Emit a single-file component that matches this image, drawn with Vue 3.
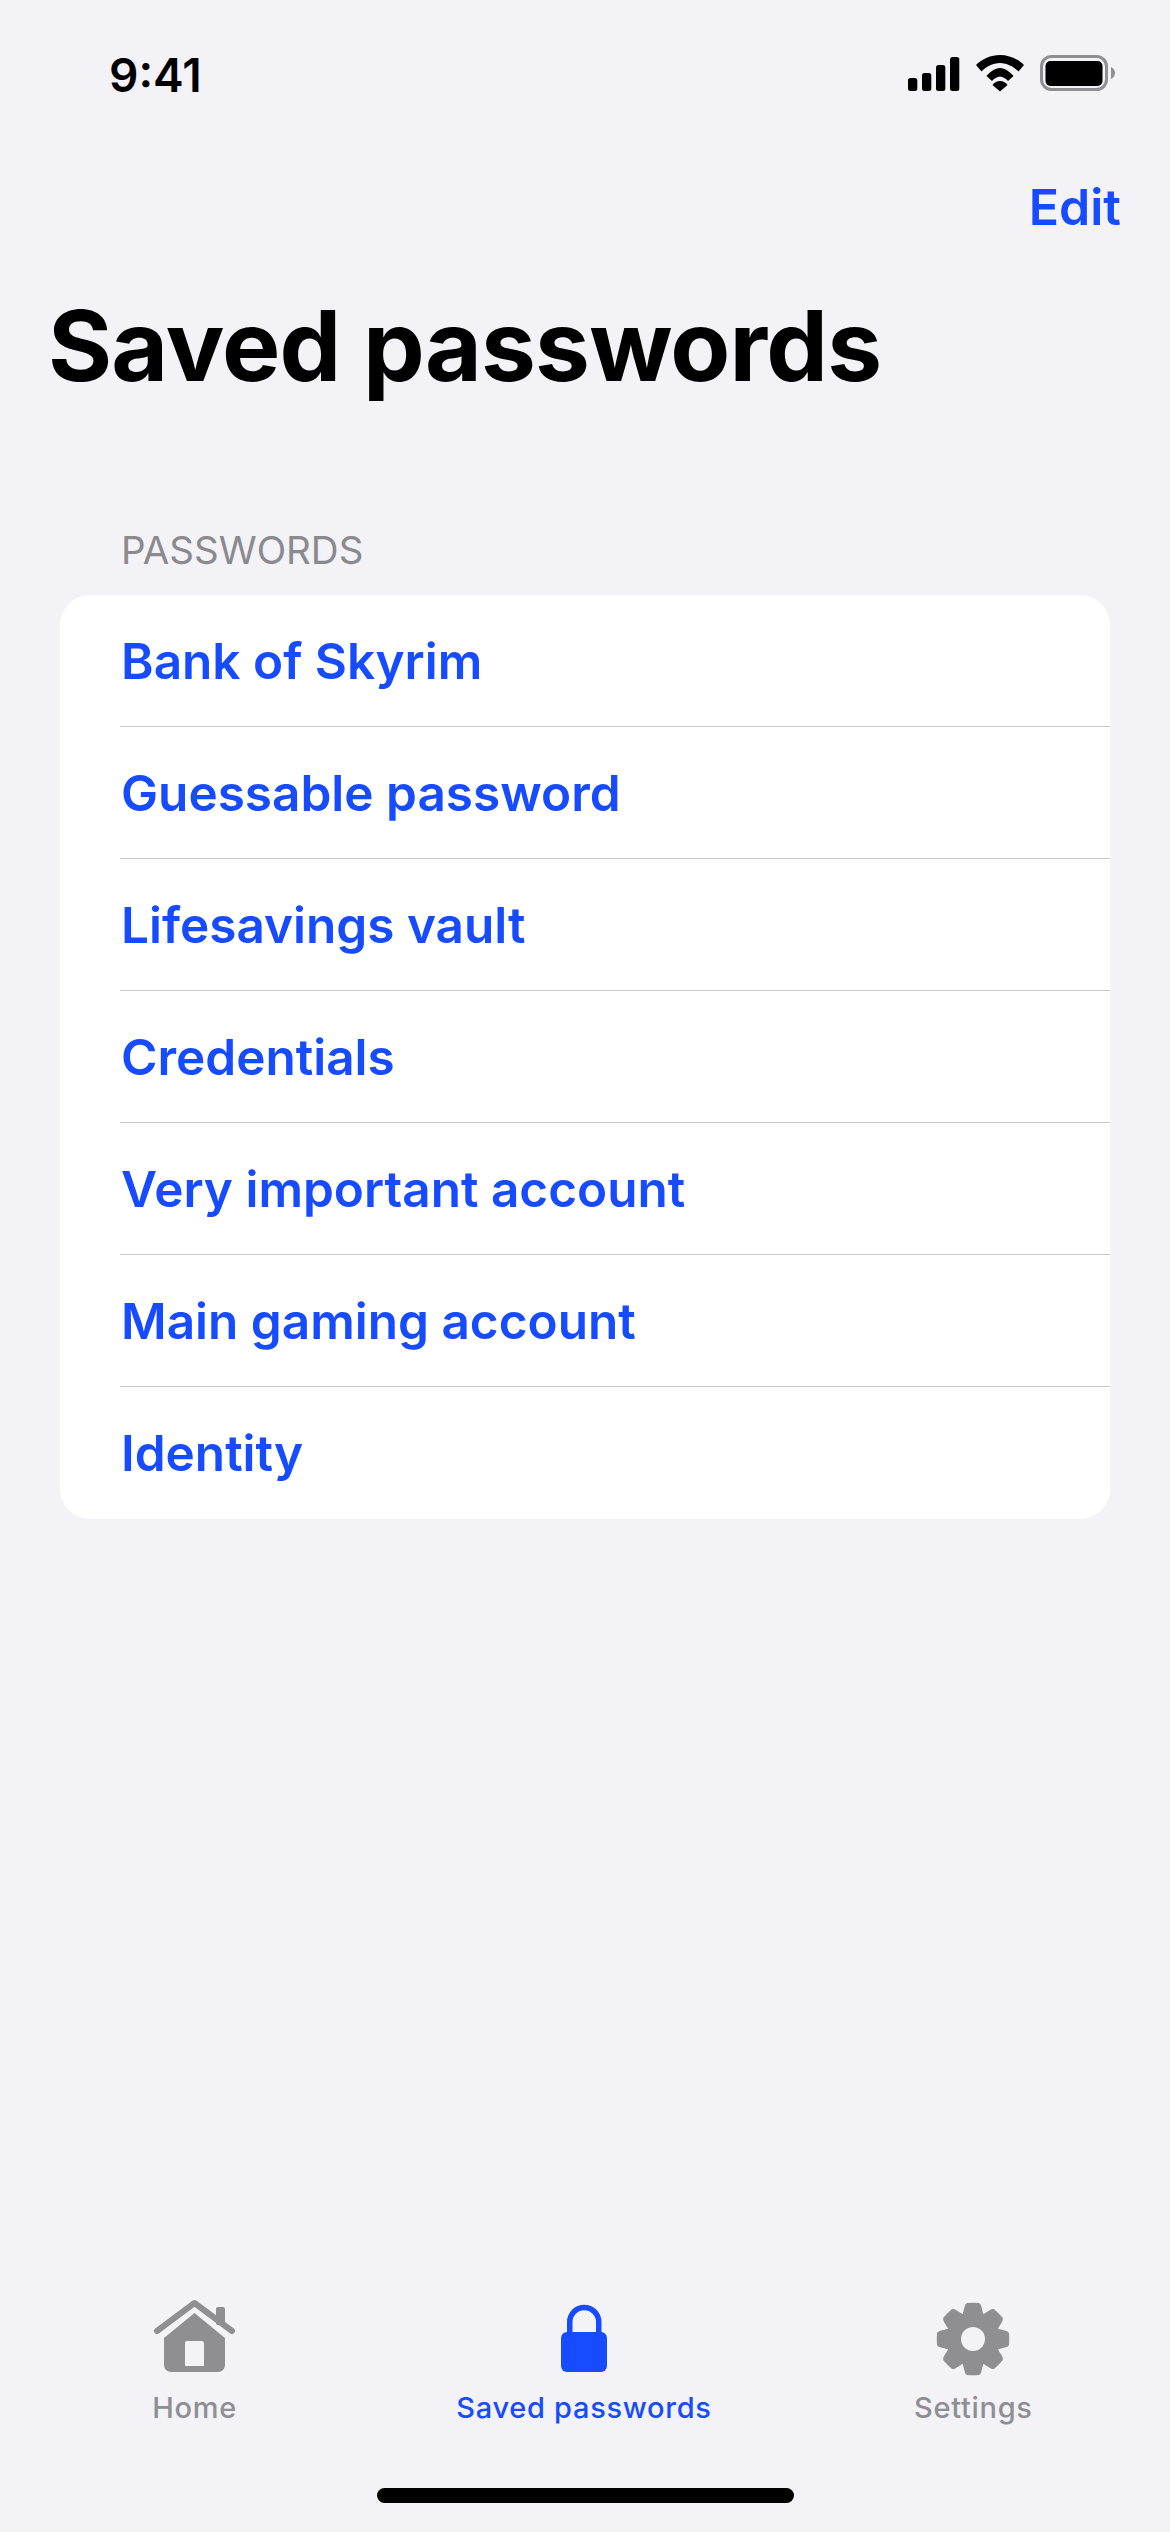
<script setup>
const rows = ['Bank of Skyrim','Guessable password','Lifesavings vault','Credentials','Very important account','Main gaming account','Identity']
const teeth = [0,45,90,135,180,225,270,315]
</script>
<template>
  <div class="screen">
    <div class="status">
      <span class="time">9:41</span>
      <div class="status-icons">
        <svg class="sig" width="52" height="34" viewBox="0 0 52 34"><rect x="0" y="21" width="9.300" height="13" rx="2.500"/><rect x="14" y="16" width="9.300" height="18" rx="2.500"/><rect x="28" y="8" width="9.300" height="26" rx="2.500"/><rect x="42" y="0" width="9.300" height="34" rx="2.500"/></svg>
        <svg class="wifi" width="48" height="37" viewBox="0 0 48 37"><path d="M0 10C6 4 15 0 24 0s18 4 24 10l-5.500 6.500C38 12 31.500 8 24 8S10 12 5.500 16.500z"/><path d="M10.500 21c3.500-4 8.500-8 13.500-8s10 4 13.500 8L32 26c-2-2.200-5-4.500-8-4.500s-6 2.300-8 4.500z"/><path d="M16.500 30c2-2.500 4.500-4 7.500-4s5.500 1.500 7.500 4L24 36.500z"/></svg>
        <svg class="batt" width="75" height="36" viewBox="0 0 75 36"><rect x="1.500" y="1.500" width="65" height="33" rx="10" fill="none" stroke="#8e8e93" stroke-width="3"/><rect x="5.500" y="6" width="57" height="25" rx="5"/><path d="M71 12c2.500 1 4 3.500 4 6s-1.500 5-4 6z" fill="#8e8e93"/></svg>
      </div>
    </div>
    <div class="nav"><span class="edit">Edit</span></div>
    <h1 class="title">Saved passwords</h1>
    <section class="group">
      <div class="group-head">PASSWORDS</div>
      <ul class="list">
        <li v-for="r in rows" :key="r" class="row"><span class="row-text">{{ r }}</span></li>
      </ul>
    </section>
    <div class="spacer"></div>
    <nav class="tabs">
      <div class="tab">
        <svg width="88" height="76" viewBox="0 0 88 76"><rect x="65" y="9" width="9" height="18" rx="2" fill="#8e8e93"/><path fill="none" stroke="#8e8e93" stroke-width="6" stroke-linecap="round" stroke-linejoin="round" d="M6 33 43.500 5 81 33"/><path fill="#8e8e93" fill-rule="evenodd" d="M13 40 43.500 15 74 40v27a7 7 0 0 1-7 7H20a7 7 0 0 1-7-7zM36 43a2 2 0 0 0-2 2v23h19V45a2 2 0 0 0-2-2z"/></svg>
        <span>Home</span>
      </div>
      <div class="tab active">
        <svg width="88" height="76" viewBox="0 0 88 76"><rect x="21" y="34" width="46" height="40" rx="6" fill="#174bff"/><path d="M29.750 36V24a14.500 14.500 0 0 1 29 0v12" fill="none" stroke="#174bff" stroke-width="5.500"/></svg>
        <span>Saved passwords</span>
      </div>
      <div class="tab">
        <svg width="88" height="78" viewBox="0 0 88 78"><g transform="translate(44 41)"><circle r="27" fill="#8e8e93"/><path v-for="t in teeth" :key="t" :transform="`rotate(${t})`" fill="#8e8e93" d="M-6-36Q0-36.500 6-36 8-35 8.500-32L11-22H-11L-8.500-32Q-8-35-6-36Z"/><circle r="12" fill="#f2f2f7"/></g></svg>
        <span class="label-gear">Settings</span>
      </div>
    </nav>
    <div class="home-wrap"><div class="home-bar"></div></div>
  </div>
</template>
<style scoped>
.screen { width: 1170px; height: 2532px; background: #f2f2f7; display: flex; flex-direction: column; font-family: Inter, "Liberation Sans", sans-serif; color: #000; overflow: hidden; }
.status { height: 150px; flex: none; box-sizing: border-box; padding: 49px 55px 0 109px; display: flex; justify-content: space-between; align-items: flex-start; }
.time { font-size: 46px; font-weight: 600; line-height: 52px; }
.status-icons { display: flex; gap: 16px; padding-top: 6px; align-items: flex-start; }
.sig { margin-top: 2px; }
.nav { height: 138px; flex: none; display: flex; justify-content: flex-end; align-items: flex-start; padding: 31px 49px 0 0; box-sizing: border-box; }
.edit { color: #174bff; font-size: 50px; font-weight: 600; line-height: 52px; }
.title { margin: 0; padding-left: 48px; font-size: 98px; font-weight: 700; line-height: 116px; letter-spacing: -0.8px; }
.group { margin: 0 60px; padding-top: 124px; }
.group-head { padding-left: 61px; font-size: 38.500px; line-height: 44px; color: #8a8a8e; margin-bottom: 23px; }
.list { margin: 0; padding: 0; list-style: none; background: #fff; border-radius: 30px; overflow: hidden; }
.row { height: 132px; margin-left: 60px; padding-left: 1px; display: flex; align-items: center; box-sizing: border-box; border-bottom: 1px solid #c6c6c8; }
.row:last-child { border-bottom: none; }
.row-text { color: #174bff; font-size: 49.500px; font-weight: 600; }
.spacer { flex: 1; }
.tabs { display: grid; grid-template-columns: 1fr 1fr 1fr; padding-right: 2px; height: 136px; margin-bottom: 40px; }
.tab { display: flex; flex-direction: column; align-items: center; color: #8e8e93; font-size: 29px; font-weight: 500; letter-spacing: 0.7px; }
.tab span { margin-top: 15px; line-height: 38px; }
.tab .label-gear { margin-top: 13px; }
.active { color: #174bff; }
.home-wrap { flex: none; height: 58px; display: flex; justify-content: center; }
.home-bar { width: 417px; height: 15px; border-radius: 8px; background: #000; margin-top: 14px; }
</style>
